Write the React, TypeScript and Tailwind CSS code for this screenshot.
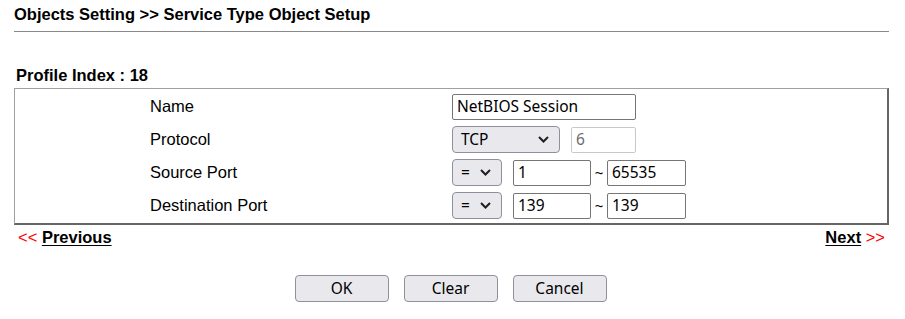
// Service Type Object Setup page
import React from 'react';

const Chevron: React.FC = () => (
  <svg className="w-[11px] h-[7px]" viewBox="0 0 11 7" fill="none" stroke="#1f1f1f" strokeWidth={2}>
    <path d="M1 1l4.5 4.5L10 1" />
  </svg>
);

const Select: React.FC<{ value: string; width: string }> = ({ value, width }) => (
  <div
    className={`${width} h-[27px] flex items-center justify-between pl-[8px] pr-[10px] bg-[#e9e9ed] border border-[#8f8f9d] rounded-[4px] text-[15.5px] text-black`}
  >
    <span>{value}</span>
    <Chevron />
  </div>
);

const Input: React.FC<{ value: string; width: string; disabled?: boolean }> = ({ value, width, disabled }) => (
  <div
    className={`${width} h-[26px] flex items-center px-[4px] bg-white border rounded-[2px] text-[15.5px] ${
      disabled ? 'border-[#c8c8c8] text-[#6d6d6d]' : 'border-[#767676] text-black'
    }`}
  >
    {value}
  </div>
);

const Button: React.FC<{ label: string }> = ({ label }) => (
  <button className="w-[94px] h-[27px] bg-[#e9e9ed] border border-[#8f8f9d] rounded-[4px] text-[15.5px] text-black">
    {label}
  </button>
);

export default function App() {
  const rows: { label: string; field: React.ReactNode }[] = [
    { label: 'Name', field: <Input value="NetBIOS Session" width="w-[184px]" /> },
    {
      label: 'Protocol',
      field: (
        <div className="flex items-center gap-[11px]">
          <Select value="TCP" width="w-[108px]" />
          <Input value="6" width="w-[65px]" disabled />
        </div>
      ),
    },
    {
      label: 'Source Port',
      field: (
        <div className="flex items-center">
          <Select value="=" width="w-[50px]" />
          <div className="ml-[11px]"><Input value="1" width="w-[78px]" /></div>
          <span className="w-[16px] text-center text-[15px]">~</span>
          <Input value="65535" width="w-[79px]" />
        </div>
      ),
    },
    {
      label: 'Destination Port',
      field: (
        <div className="flex items-center">
          <Select value="=" width="w-[50px]" />
          <div className="ml-[11px]"><Input value="139" width="w-[78px]" /></div>
          <span className="w-[16px] text-center text-[15px]">~</span>
          <Input value="139" width="w-[79px]" />
        </div>
      ),
    },
  ];

  return (
    <div className="w-[905px] h-[319px] bg-white font-['Liberation_Sans',Arial,sans-serif] text-black">
      <div className="pl-[14px] pr-[16px] pt-[4px]">
        {/* Header */}
        <h1 className="text-[16.5px] font-bold leading-[20px]">Objects Setting &gt;&gt; Service Type Object Setup</h1>
        <div className="mt-[7px] h-px bg-[#8a8a8a]" />

        <div className="mt-[33px] pl-[2px] text-[16.5px] font-bold leading-[20px]">Profile Index : 18</div>

        {/* Form table */}
        <div className="mt-[3px] border-t border-l border-[#a0a0a0] border-r-2 border-b-2 border-r-[#666] border-b-[#666] py-[1px]">
          {rows.map((r) => (
            <div key={r.label} className="grid grid-cols-[437px_1fr] h-[33px] items-center">
              <span className="pl-[135px] text-[16.5px]">{r.label}</span>
              <div className="font-['Noto_Sans',sans-serif]">{r.field}</div>
            </div>
          ))}
        </div>

        {/* Prev / Next */}
        <div className="flex justify-between mt-[2px] px-[4px] text-[16.5px] leading-[20px]">
          <span>
            <span className="text-[#ff0000]">&lt;&lt;</span>{' '}
            <span className="font-bold underline underline-offset-2">Previous</span>
          </span>
          <span>
            <span className="font-bold underline underline-offset-2">Next</span>{' '}
            <span className="text-[#ff0000]">&gt;&gt;</span>
          </span>
        </div>

        {/* Buttons */}
        <div className="flex justify-center gap-[15px] mt-[28px] pr-[2px] font-['Noto_Sans',sans-serif]">
          <Button label="OK" />
          <Button label="Clear" />
          <Button label="Cancel" />
        </div>
      </div>
    </div>
  );
}
